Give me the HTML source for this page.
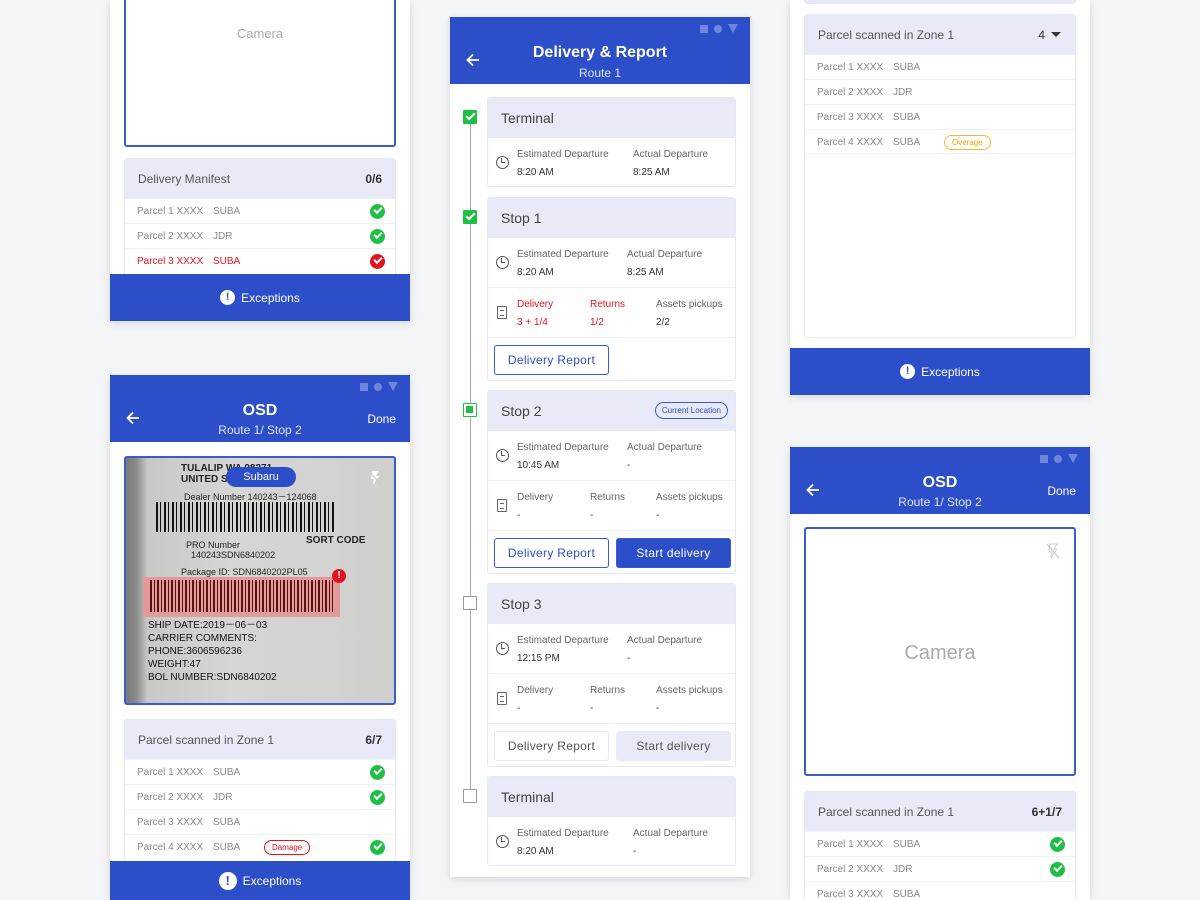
<!DOCTYPE html>
<html><head><meta charset="utf-8"><style>
*{box-sizing:border-box;margin:0;padding:0}
html{width:1200px;height:900px;overflow:hidden}
body{width:1200px;height:900px;background:#f4f5f7;position:relative;overflow:hidden;font-family:"Liberation Sans",Arial,sans-serif;color:#333}
.a{position:absolute}
.scr{position:absolute;background:#fff;box-shadow:0 2px 8px rgba(0,0,0,.12);overflow:hidden}
.bar{position:absolute;left:0;width:300px;background:#2c4fc9;color:#fff}
.st{position:absolute;right:12px;top:7px;display:flex;gap:6px;align-items:center}
.st i{display:block;width:8px;height:8px;background:#6f86dd}
.st i.c{border-radius:50%}
.st i.t{width:0;height:0;background:none;border-left:5px solid transparent;border-right:5px solid transparent;border-top:9px solid #6f86dd}
.card{position:absolute;background:#fff;border:1px solid #e6e8f5;border-radius:3px;overflow:hidden}
.hd{background:#e8eaf7;position:relative}
.row{position:relative;border-top:1px solid #eef0f8;height:25px;font-size:10px;color:#888}
.row span{position:absolute;top:7px}
.ok{position:absolute;right:10px;top:5px;width:15px;height:15px;border-radius:50%;background:#1fbf46}
.ok:after{content:"";position:absolute;left:4px;top:3px;width:6px;height:3px;border-left:2px solid #fff;border-bottom:2px solid #fff;transform:rotate(-45deg)}
.ex{position:absolute;left:0;width:300px;height:47px;background:#2c4fc9;color:#fff;font-size:12px;display:flex;align-items:center;justify-content:center;gap:6px}
.exi{width:15px;height:15px;border-radius:50%;background:#fff;color:#2c4fc9;font-weight:bold;font-size:11px;text-align:center;line-height:15px}
.lbl{font-size:10px;color:#666;position:absolute}
.val{font-size:10px;color:#333;position:absolute}
.red{color:#e0141e}
.btn{position:absolute;height:30px;border:1px solid #3b5bd0;border-radius:3px;font-size:12px;color:#2c4fc9;text-align:center;line-height:28px;letter-spacing:.3px}
.chk{position:absolute;left:463px;width:14px;height:14px;background:#1fbf46;border-radius:1px}
.chk.y:after{content:"";position:absolute;left:3px;top:3px;width:7px;height:3px;border-left:2px solid #fff;border-bottom:2px solid #fff;transform:rotate(-45deg)}
.chk.e{background:#fff;border:1.5px solid #999}
.clock{position:absolute;width:13px;height:13px;border:1.5px solid #555;border-radius:50%}
.clock:after{content:"";position:absolute;left:4px;top:1px;width:3px;height:4px;border-left:1.5px solid #555;border-bottom:1.5px solid #555}
.doc{position:absolute;width:10px;height:13px;border:1.5px solid #666;border-radius:1px}
.doc:after{content:"";position:absolute;left:1.5px;top:3px;width:4px;height:4px;border-top:1px solid #666;border-bottom:1px solid #666}
.arr{position:absolute;left:16px;top:36px}
</style></head><body>

<!-- LEFT TOP -->
<div class="scr" style="left:110px;top:0;width:300px;height:321px">
 <div class="a" style="left:14px;top:-4px;width:272px;height:151px;border:2px solid #3b5bd0;border-radius:3px;text-align:center;padding-top:28px;font-size:13px;color:#aaa">Camera</div>
 <div class="card" style="left:14px;top:158px;width:272px;height:120px">
  <div class="hd" style="height:39px"><span class="a" style="left:13px;top:13px;font-size:12px;color:#555">Delivery Manifest</span><span class="a" style="right:13px;top:13px;font-size:12px;font-weight:bold;color:#333">0/6</span></div>
  <div class="row"><span style="left:12px">Parcel 1 XXXX</span><span style="left:88px">SUBA</span><i class="ok"></i></div>
  <div class="row"><span style="left:12px">Parcel 2 XXXX</span><span style="left:88px">JDR</span><i class="ok"></i></div>
  <div class="row" style="color:#e0141e"><span style="left:12px">Parcel 3 XXXX</span><span style="left:88px">SUBA</span><i class="ok" style="background:#e0141e"></i></div>
 </div>
 <div class="ex" style="top:274px"><div class="exi">!</div>Exceptions</div>
</div>

<!-- LEFT BOTTOM -->
<div class="scr" style="left:110px;top:375px;width:300px;height:525px">
 <div class="bar" style="top:0;height:67px"><div class="st"><i></i><i class="c"></i><i class="t"></i></div>
  <svg class="arr" width="14" height="14" viewBox="0 0 14 14"><path d="M13 7H2M7 1.5 1.5 7 7 12.5" stroke="#fff" stroke-width="1.8" fill="none"/></svg>
  <div class="a" style="left:0;width:300px;top:27px;text-align:center;font-size:16px;font-weight:bold">OSD</div>
  <div class="a" style="left:0;width:300px;top:48px;text-align:center;font-size:12px;color:#dfe4fb">Route 1/ Stop 2</div>
  <div class="a" style="right:14px;top:37px;font-size:12px">Done</div>
 </div>
 <div class="a" style="left:14px;top:81px;width:272px;height:249px;border:2px solid #3b5bd0;border-radius:3px;overflow:hidden;background:linear-gradient(90deg,#7a7a78 0,#8c8c8a 4%,#c8c8c6 8%,#d6d6d4 40%,#cfcfcd 100%)">
  <div class="a" style="left:55px;top:5px;font-size:10px;font-weight:bold;color:#222;line-height:11px">TULALIP WA 98271<br>UNITED STATES</div>
  <div class="a" style="left:100px;top:9px;width:70px;height:20px;background:#2c4fc9;border-radius:10px;color:#fff;font-size:11px;text-align:center;line-height:20px">Subaru</div>
  <div class="a" style="left:58px;top:32px;font-size:9px;color:#222">Dealer Number 140243－124068</div>
  <div class="a" style="left:30px;top:44px;width:180px;height:30px;background:repeating-linear-gradient(90deg,#111 0 2px,transparent 2px 4px,#111 4px 5px,transparent 5px 8px)"></div>
  <div class="a" style="left:60px;top:82px;font-size:9px;color:#222;line-height:10px">PRO Number<br>&nbsp;&nbsp;140243SDN6840202</div>
  <div class="a" style="left:180px;top:77px;font-size:10px;font-weight:bold;color:#222">SORT CODE</div>
  <div class="a" style="left:55px;top:109px;font-size:9px;color:#222">Package ID: SDN6840202PL05</div>
  <div class="a" style="left:17px;top:119px;width:197px;height:40px;background:#e39a9a"></div>
  <div class="a" style="left:24px;top:122px;width:183px;height:32px;background:repeating-linear-gradient(90deg,#5a1010 0 2px,transparent 2px 4px,#5a1010 4px 5px,transparent 5px 7px)"></div>
  <div class="a" style="left:206px;top:111px;width:14px;height:14px;border-radius:50%;background:#e0141e;color:#fff;font-size:10px;font-weight:bold;text-align:center;line-height:14px">!</div>
  <div class="a" style="left:22px;top:161px;font-size:10px;color:#111;line-height:13px">SHIP DATE:2019－06－03<br>CARRIER COMMENTS:<br>PHONE:3606596236<br>WEIGHT:47<br>BOL NUMBER:SDN6840202</div>
  <svg class="a" style="left:242px;top:12px" width="14" height="16" viewBox="0 0 14 16"><path d="M4 1h7L8 6h3L5 15l1-6H3z" fill="#fff"/><path d="M1 1 13 15" stroke="#ccc" stroke-width="1.3"/></svg>
 </div>
 <div class="card" style="left:14px;top:344px;width:272px;height:150px">
  <div class="hd" style="height:39px"><span class="a" style="left:13px;top:13px;font-size:12px;color:#555">Parcel scanned in Zone 1</span><span class="a" style="right:13px;top:13px;font-size:12px;font-weight:bold;color:#333">6/7</span></div>
  <div class="row"><span style="left:12px">Parcel 1 XXXX</span><span style="left:88px">SUBA</span><i class="ok"></i></div>
  <div class="row"><span style="left:12px">Parcel 2 XXXX</span><span style="left:88px">JDR</span><i class="ok"></i></div>
  <div class="row"><span style="left:12px">Parcel 3 XXXX</span><span style="left:88px">SUBA</span></div>
  <div class="row"><span style="left:12px">Parcel 4 XXXX</span><span style="left:88px">SUBA</span><span style="left:139px;top:5px;border:1px solid #e0141e;color:#e0141e;border-radius:8px;font-size:8px;padding:2px 7px">Damage</span><i class="ok"></i></div>
 </div>
 <div class="ex" style="top:486px;height:39px;padding-top:0"><div class="exi" style="width:18px;height:18px;line-height:18px;font-size:13px">!</div>Exceptions</div>
</div>

<!-- MIDDLE -->
<div class="scr" style="left:450px;top:17px;width:300px;height:860px">
 <div class="bar" style="top:0;height:67px"><div class="st"><i></i><i class="c"></i><i class="t"></i></div>
  <svg class="arr" width="14" height="14" viewBox="0 0 14 14"><path d="M13 7H2M7 1.5 1.5 7 7 12.5" stroke="#fff" stroke-width="1.8" fill="none"/></svg>
  <div class="a" style="left:0;width:300px;top:27px;text-align:center;font-size:16px;font-weight:bold">Delivery &amp; Report</div>
  <div class="a" style="left:0;width:300px;top:49px;text-align:center;font-size:12px;color:#dfe4fb">Route 1</div>
 </div>
</div>
<div class="a" style="left:470px;top:117px;width:1px;height:680px;background:#aaa"></div>
<i class="chk y" style="top:110px"></i>
<i class="chk y" style="top:210px"></i>
<i class="chk" style="top:403px;background:#fff;border:1.5px solid #1fbf46"><b class="a" style="left:2px;top:2px;width:7px;height:7px;background:#1fbf46"></b></i>
<i class="chk e" style="top:596px"></i>
<i class="chk e" style="top:789px"></i>

<div class="card" style="left:487px;top:97px;width:249px;height:90px">
 <div class="hd" style="height:40px"><span class="a" style="left:13px;top:12px;font-size:14px;color:#444">Terminal</span></div>
 <i class="clock" style="left:8px;top:58px"></i>
 <span class="lbl" style="left:29px;top:51px">Estimated Departure</span><span class="val" style="left:29px;top:69px">8:20 AM</span>
 <span class="lbl" style="left:145px;top:51px">Actual Departure</span><span class="val" style="left:145px;top:69px">8:25 AM</span>
</div>
<div class="card" style="left:487px;top:197px;width:249px;height:184px">
 <div class="hd" style="height:40px"><span class="a" style="left:13px;top:12px;font-size:14px;color:#444">Stop 1</span></div>
 <i class="clock" style="left:8px;top:58px"></i>
 <span class="lbl" style="left:29px;top:51px">Estimated Departure</span><span class="val" style="left:29px;top:69px">8:20 AM</span>
 <span class="lbl" style="left:139px;top:51px">Actual Departure</span><span class="val" style="left:139px;top:69px">8:25 AM</span>
 <div class="a" style="left:0;top:89px;width:249px;border-top:1px solid #eef0f8"></div>
 <i class="doc" style="left:9px;top:108px"></i>
 <span class="lbl red" style="left:29px;top:101px">Delivery</span><span class="val red" style="left:29px;top:119px">3 + 1/4</span>
 <span class="lbl red" style="left:102px;top:101px">Returns</span><span class="val red" style="left:102px;top:119px">1/2</span>
 <span class="lbl" style="left:168px;top:101px">Assets pickups</span><span class="val" style="left:168px;top:119px">2/2</span>
 <div class="a" style="left:0;top:139px;width:249px;border-top:1px solid #eef0f8"></div>
 <div class="btn" style="left:6px;top:147px;width:115px">Delivery Report</div>
</div>
<div class="card" style="left:487px;top:390px;width:249px;height:184px">
 <div class="hd" style="height:40px"><span class="a" style="left:13px;top:12px;font-size:14px;color:#444">Stop 2</span>
  <span class="a" style="right:7px;top:11px;border:1px solid #3b5bd0;border-radius:9px;font-size:8px;color:#2c4fc9;padding:3px 6px">Current Location</span></div>
 <i class="clock" style="left:8px;top:58px"></i>
 <span class="lbl" style="left:29px;top:51px">Estimated Departure</span><span class="val" style="left:29px;top:69px">10:45 AM</span>
 <span class="lbl" style="left:139px;top:51px">Actual Departure</span><span class="val" style="left:139px;top:69px">-</span>
 <div class="a" style="left:0;top:89px;width:249px;border-top:1px solid #eef0f8"></div>
 <i class="doc" style="left:9px;top:108px"></i>
 <span class="lbl" style="left:29px;top:101px">Delivery</span><span class="val" style="left:29px;top:119px">-</span>
 <span class="lbl" style="left:102px;top:101px">Returns</span><span class="val" style="left:102px;top:119px">-</span>
 <span class="lbl" style="left:168px;top:101px">Assets pickups</span><span class="val" style="left:168px;top:119px">-</span>
 <div class="a" style="left:0;top:139px;width:249px;border-top:1px solid #eef0f8"></div>
 <div class="btn" style="left:6px;top:147px;width:115px">Delivery Report</div>
 <div class="btn" style="left:128px;top:147px;width:115px;background:#2c4fc9;color:#fff">Start delivery</div>
</div>
<div class="card" style="left:487px;top:583px;width:249px;height:184px">
 <div class="hd" style="height:40px"><span class="a" style="left:13px;top:12px;font-size:14px;color:#444">Stop 3</span></div>
 <i class="clock" style="left:8px;top:58px"></i>
 <span class="lbl" style="left:29px;top:51px">Estimated Departure</span><span class="val" style="left:29px;top:69px">12:15 PM</span>
 <span class="lbl" style="left:139px;top:51px">Actual Departure</span><span class="val" style="left:139px;top:69px">-</span>
 <div class="a" style="left:0;top:89px;width:249px;border-top:1px solid #eef0f8"></div>
 <i class="doc" style="left:9px;top:108px"></i>
 <span class="lbl" style="left:29px;top:101px">Delivery</span><span class="val" style="left:29px;top:119px">-</span>
 <span class="lbl" style="left:102px;top:101px">Returns</span><span class="val" style="left:102px;top:119px">-</span>
 <span class="lbl" style="left:168px;top:101px">Assets pickups</span><span class="val" style="left:168px;top:119px">-</span>
 <div class="a" style="left:0;top:139px;width:249px;border-top:1px solid #eef0f8"></div>
 <div class="btn" style="left:6px;top:147px;width:115px;border-color:#e6e8f5;color:#555">Delivery Report</div>
 <div class="btn" style="left:128px;top:147px;width:115px;border-color:#e8eaf7;background:#e8eaf7;color:#555">Start delivery</div>
</div>
<div class="card" style="left:487px;top:776px;width:249px;height:90px">
 <div class="hd" style="height:40px"><span class="a" style="left:13px;top:12px;font-size:14px;color:#444">Terminal</span></div>
 <i class="clock" style="left:8px;top:58px"></i>
 <span class="lbl" style="left:29px;top:51px">Estimated Departure</span><span class="val" style="left:29px;top:69px">8:20 AM</span>
 <span class="lbl" style="left:145px;top:51px">Actual Departure</span><span class="val" style="left:145px;top:69px">-</span>
</div>

<!-- RIGHT TOP -->
<div class="scr" style="left:790px;top:0;width:300px;height:395px">
 <div class="card" style="left:14px;top:-10px;width:272px;height:14px;background:#e8eaf7"></div>
 <div class="card" style="left:14px;top:14px;width:272px;height:324px">
  <div class="hd" style="height:39px"><span class="a" style="left:13px;top:13px;font-size:12px;color:#555">Parcel scanned in Zone 1</span><span class="a" style="right:30px;top:13px;font-size:12px;color:#333">4</span>
   <i class="a" style="right:14px;top:17px;border-left:5px solid transparent;border-right:5px solid transparent;border-top:5px solid #333"></i></div>
  <div class="row"><span style="left:12px">Parcel 1 XXXX</span><span style="left:88px">SUBA</span></div>
  <div class="row"><span style="left:12px">Parcel 2 XXXX</span><span style="left:88px">JDR</span></div>
  <div class="row"><span style="left:12px">Parcel 3 XXXX</span><span style="left:88px">SUBA</span></div>
  <div class="row" style="border-bottom:1px solid #eef0f8"><span style="left:12px">Parcel 4 XXXX</span><span style="left:88px">SUBA</span><span style="left:139px;top:5px;border:1px solid #f5b82e;color:#f0a500;border-radius:8px;font-size:8px;padding:2px 7px">Overage</span></div>
 </div>
 <div class="ex" style="top:348px"><div class="exi">!</div>Exceptions</div>
</div>

<!-- RIGHT BOTTOM -->
<div class="scr" style="left:790px;top:447px;width:300px;height:453px">
 <div class="bar" style="top:0;height:67px"><div class="st"><i></i><i class="c"></i><i class="t"></i></div>
  <svg class="arr" width="14" height="14" viewBox="0 0 14 14"><path d="M13 7H2M7 1.5 1.5 7 7 12.5" stroke="#fff" stroke-width="1.8" fill="none"/></svg>
  <div class="a" style="left:0;width:300px;top:27px;text-align:center;font-size:16px;font-weight:bold">OSD</div>
  <div class="a" style="left:0;width:300px;top:48px;text-align:center;font-size:12px;color:#dfe4fb">Route 1/ Stop 2</div>
  <div class="a" style="right:14px;top:37px;font-size:12px">Done</div>
 </div>
 <div class="a" style="left:14px;top:80px;width:272px;height:249px;border:2px solid #3b5bd0;border-radius:3px;text-align:center;padding-top:113px;font-size:20px;color:#aaa">Camera
  <svg class="a" style="right:14px;top:14px" width="14" height="16" viewBox="0 0 14 16"><path d="M4 1h7L8 6h3L5 15l1-6H3z" fill="none" stroke="#ccc" stroke-width="1"/><path d="M1 1 13 15" stroke="#ccc" stroke-width="1.3"/></svg></div>
 <div class="card" style="left:14px;top:344px;width:272px;height:130px">
  <div class="hd" style="height:39px"><span class="a" style="left:13px;top:13px;font-size:12px;color:#555">Parcel scanned in Zone 1</span><span class="a" style="right:13px;top:13px;font-size:12px;font-weight:bold;color:#333">6+1/7</span></div>
  <div class="row"><span style="left:12px">Parcel 1 XXXX</span><span style="left:88px">SUBA</span><i class="ok"></i></div>
  <div class="row"><span style="left:12px">Parcel 2 XXXX</span><span style="left:88px">JDR</span><i class="ok"></i></div>
  <div class="row"><span style="left:12px">Parcel 3 XXXX</span><span style="left:88px">SUBA</span></div>
 </div>
</div>
</body></html>
